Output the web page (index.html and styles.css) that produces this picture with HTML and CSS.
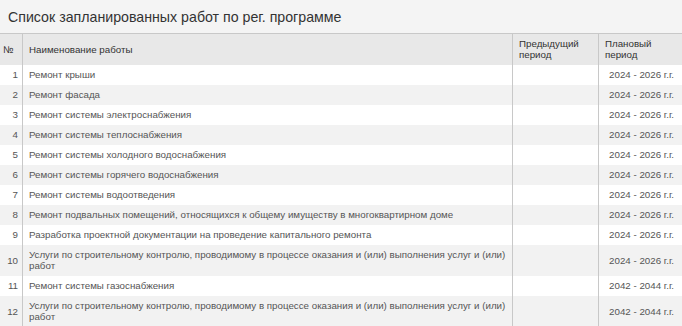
FILE: index.html
```html
<!DOCTYPE html>
<html lang="ru">
<head>
<meta charset="utf-8">
<link rel="stylesheet" href="styles.css">
</head>
<body>
<div class="page">
  <h1 class="title">Список запланированных работ по рег. программе</h1>
  <div class="table">
    <div class="row head">
      <div class="cell num">№</div>
      <div class="cell name">Наименование работы</div>
      <div class="cell prev top">Предыдущий период</div>
      <div class="cell plan top">Плановый период</div>
    </div>
    <div class="row"><div class="cell num">1</div><div class="cell name">Ремонт крыши</div><div class="cell prev"></div><div class="cell plan">2024 - 2026 г.г.</div></div>
    <div class="row"><div class="cell num">2</div><div class="cell name">Ремонт фасада</div><div class="cell prev"></div><div class="cell plan">2024 - 2026 г.г.</div></div>
    <div class="row"><div class="cell num">3</div><div class="cell name">Ремонт системы электроснабжения</div><div class="cell prev"></div><div class="cell plan">2024 - 2026 г.г.</div></div>
    <div class="row"><div class="cell num">4</div><div class="cell name">Ремонт системы теплоснабжения</div><div class="cell prev"></div><div class="cell plan">2024 - 2026 г.г.</div></div>
    <div class="row"><div class="cell num">5</div><div class="cell name">Ремонт системы холодного водоснабжения</div><div class="cell prev"></div><div class="cell plan">2024 - 2026 г.г.</div></div>
    <div class="row"><div class="cell num">6</div><div class="cell name">Ремонт системы горячего водоснабжения</div><div class="cell prev"></div><div class="cell plan">2024 - 2026 г.г.</div></div>
    <div class="row"><div class="cell num">7</div><div class="cell name">Ремонт системы водоотведения</div><div class="cell prev"></div><div class="cell plan">2024 - 2026 г.г.</div></div>
    <div class="row"><div class="cell num">8</div><div class="cell name">Ремонт подвальных помещений, относящихся к общему имуществу в многоквартирном доме</div><div class="cell prev"></div><div class="cell plan">2024 - 2026 г.г.</div></div>
    <div class="row"><div class="cell num">9</div><div class="cell name">Разработка проектной документации на проведение капитального ремонта</div><div class="cell prev"></div><div class="cell plan">2024 - 2026 г.г.</div></div>
    <div class="row"><div class="cell num">10</div><div class="cell name">Услуги по строительному контролю, проводимому в процессе оказания и (или) выполнения услуг и (или) работ</div><div class="cell prev"></div><div class="cell plan">2024 - 2026 г.г.</div></div>
    <div class="row"><div class="cell num">11</div><div class="cell name">Ремонт системы газоснабжения</div><div class="cell prev"></div><div class="cell plan">2042 - 2044 г.г.</div></div>
    <div class="row"><div class="cell num">12</div><div class="cell name">Услуги по строительному контролю, проводимому в процессе оказания и (или) выполнения услуг и (или) работ</div><div class="cell prev"></div><div class="cell plan">2042 - 2044 г.г.</div></div>
  </div>
</div>
</body>
</html>
```
FILE: styles.css
```css
html, body {
  margin: 0;
  padding: 0;
  background: #f4f4f4;
}
.page {
  width: 682px;
  font-family: "Liberation Sans", Arial, sans-serif;
}
.title {
  margin: 0;
  height: 33px;
  padding: 0 0 0 8px;
  box-sizing: border-box;
  font-size: 14.2px;
  font-weight: normal;
  line-height: 34px;
  color: #333;
}
.table {
  border-top: 1px solid #c8c8c8;
}
.row {
  display: grid;
  grid-template-columns: 22px 490px 86px 1fr;
  font-size: 9.75px;
  line-height: 11px;
  color: #555;
}
.row:nth-child(odd) { background: #f2f2f2; }
.row:nth-child(even) { background: #fff; }
.row.head { background: #e8e8e8; color: #333; }
.cell {
  padding: 4px 6px 5px 6px;
  display: flex;
  align-items: center;
}
.cell + .cell { border-left: 1px solid #c8c8c8; }
.num { justify-content: flex-end; padding: 4px 4px 5px 2px; }
.head .num { justify-content: flex-start; padding-left: 3px; }
.name { display: block; }
.head .name { display: flex; }
.plan { justify-content: center; padding-left: 2px; padding-right: 0; }
.head .plan { justify-content: flex-start; padding-left: 6px; }
.top { align-items: flex-start; }
```
